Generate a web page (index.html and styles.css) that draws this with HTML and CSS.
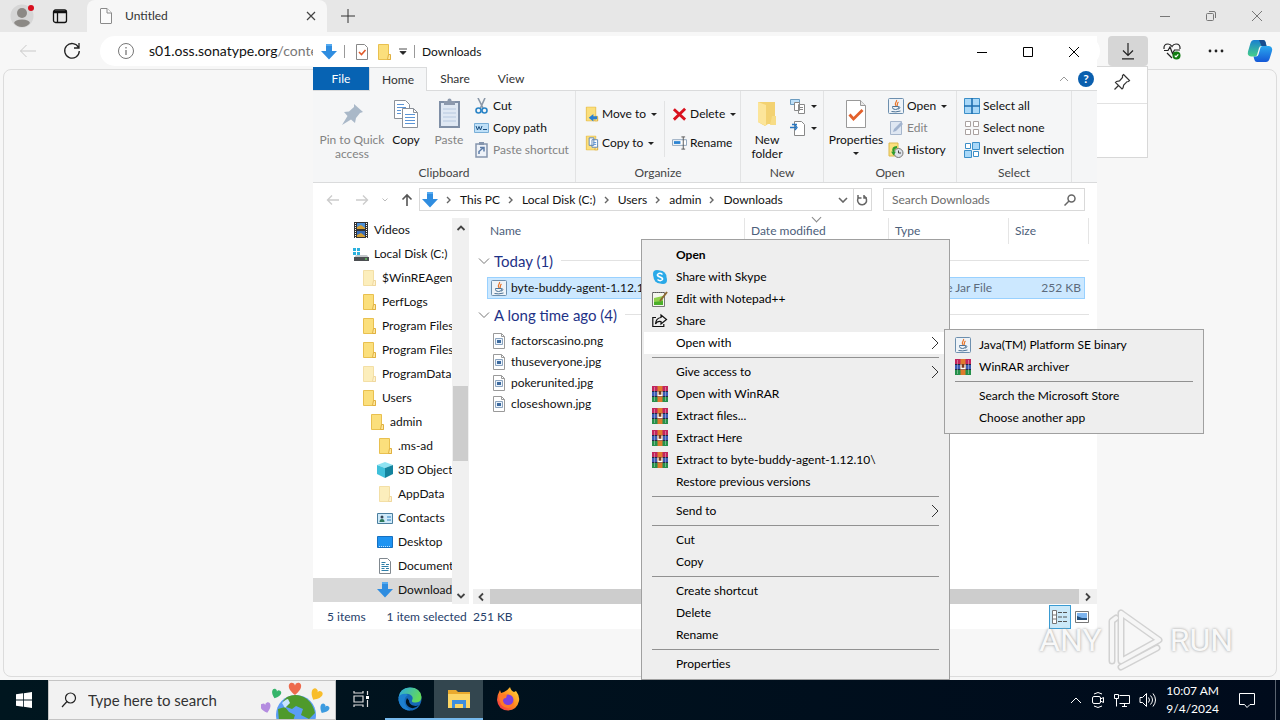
FILE: index.html
```html
<!DOCTYPE html>
<html lang="en">
  <head>
    <meta charset="UTF-8" />
    <meta name="viewport" content="width=device-width, initial-scale=1.0" />
    <title>Desktop</title>
    <link rel="stylesheet" href="styles.css">
  </head>
  <body>
    <!-- shared icons -->
    <svg class="sprite" aria-hidden="true">
      <symbol id="folder" viewBox="0 0 16 16">
        <path d="M2.500 .5h10v11h2v4h-12z" fill="#fbdf7c" stroke="#e9c04f"/>
        <path d="M12.500 10.500h2v5h-3z" fill="#ffe9a0" stroke="#e0b040"/>
      </symbol>
      <symbol id="arrow-blue" viewBox="0 0 16 16">
        <path d="M5 0h6v7h5l-8 8.500L0 7h5z" fill="#2f8de0"/>
        <path d="M5 0h6v2H5z" fill="#55aaf0"/>
      </symbol>
      <symbol id="winrar" viewBox="0 0 16 16">
        <path d="M0 0h16v5H0z" fill="#c2255c"/>
        <path d="M0 5h16v5.500H0z" fill="#3b5bb5"/>
        <path d="M0 10.500h16V16H0z" fill="#25904a"/>
        <path d="M0 5.500h16M0 10.500h16" stroke="#222a44"/>
        <path d="M2.500 1v14M13.500 1v14" stroke="#fff" stroke-opacity=".35"/>
        <path d="M5.500 0h5v16h-5z" fill="#e07a2c"/>
        <path d="M5 5h6v6H5z" fill="#7a3a1c"/>
        <path d="M6 5.500v4h4v-4" fill="none" stroke="#fff" stroke-width="1.300"/>
      </symbol>
      <symbol id="java" viewBox="0 0 16 16">
        <rect x=".5" y=".5" width="15" height="15" rx="1" fill="#eef3f8" stroke="#6d8fae"/>
        <path d="M8.500 2c1 2-3 3-.5 6M10.500 4c-2 1.500-.5 2-1.500 4" fill="none" stroke="#e8762c" stroke-width="1.200"/>
        <path d="M4.500 8.500h6v1q0 2-3 2t-3-2zM10.500 9c2.500-.5 1.500 2-.5 2M3.500 13.500q4 1 9-.5" fill="none" stroke="#4d7396"/>
      </symbol>
      <symbol id="image" viewBox="0 0 16 16">
        <path d="M2.500 .5h8l3 3v12h-11z" fill="#fff" stroke="#9a9a9a"/>
        <path d="M10.500 .5v3h3" fill="none" stroke="#9a9a9a"/>
        <path d="M4.500 5.500h7v6h-7z" fill="#eaf2fb" stroke="#8ba4bf"/>
        <path d="M6 7h4v3H6z" fill="#3d6a9e"/>
      </symbol>
      <symbol id="chevron" viewBox="0 0 8 14">
        <path d="M1 1l6 6-6 6" fill="none" stroke="#333"/>
      </symbol>
      <symbol id="crumb" viewBox="0 0 6 8">
        <path d="M1 1l3 3-3 3" fill="none" stroke="#666" stroke-width="1.400"/>
      </symbol>
      <symbol id="scroll-arrow" viewBox="0 0 10 10">
        <path d="M1.500 7L5 3.500 8.500 7" fill="none" stroke="#444" stroke-width="1.800"/>
      </symbol>
      <symbol id="group-arrow" viewBox="0 0 12 8">
        <path d="M1 1.500l5 5 5-5" fill="none" stroke="#777"/>
      </symbol>
    </svg>

    <main class="browser">
      <div class="tab-strip">
        <div class="profile">
          <svg width="28" height="28" viewBox="0 0 28 28"><circle cx="14" cy="14" r="11.500" fill="#d6d6d6"/><circle cx="14" cy="11" r="5" fill="#8c8985"/><path d="M6 21q1-3.500 8-3.500t8 3.500q-3 4-8 4t-8-4z" fill="#8c8985"/><circle cx="23" cy="6" r="3" fill="#d80f1e"/></svg>
          <svg width="16" height="16" viewBox="0 0 16 16" fill="none" stroke="#111" stroke-width="1.300"><rect x="1.500" y="2" width="13" height="12.500" rx="2"/><path d="M2 4h12" stroke-width="2.500"/><path d="M5.500 4v10"/></svg>
        </div>
        <div class="tab">
          <svg width="16" height="18" viewBox="0 0 16 18" fill="#fbfbfb" stroke="#8a8a8a"><path d="M3 1.500h6l4.500 4.500v10q0 .5-.5.500H3q-.5 0-.5-.5V2q0-.5.500-.5z"/><path d="M9 1.500V6h4.500"/></svg>
          <span>Untitled</span>
          <button class="plain" aria-label="Close tab"><svg width="10" height="10" viewBox="0 0 10 10" stroke="#444" stroke-width="1.200"><path d="M1 1l8 8M9 1l-8 8"/></svg></button>
        </div>
        <button class="plain new-tab" aria-label="New tab"><svg width="14" height="14" viewBox="0 0 14 14" stroke="#333"><path d="M7 0v14M0 7h14"/></svg></button>
        <div class="window-buttons muted">
          <button aria-label="Minimize"><svg width="12" height="12" viewBox="0 0 12 12"><path d="M1 6.500h10"/></svg></button>
          <button aria-label="Restore"><svg width="12" height="12" viewBox="0 0 12 12"><rect x="1.500" y="3.500" width="7" height="7" rx="1"/><path d="M4 1.500h5q1.500 0 1.500 1.500v5"/></svg></button>
          <button aria-label="Close"><svg width="12" height="12" viewBox="0 0 12 12"><path d="M1 1l10 10M11 1L1 11"/></svg></button>
        </div>
      </div>

      <div class="toolbar">
        <button class="tool" aria-label="Back"><svg width="18" height="14" viewBox="0 0 18 14" fill="none" stroke="#c9c9c9"><path d="M17 7H1.500M7.500 1l-6 6 6 6"/></svg></button>
        <button class="tool" aria-label="Refresh"><svg width="18" height="18" viewBox="0 0 18 18" fill="none" stroke="#222" stroke-width="1.300"><path d="M15.500 5.500A7.300 7.300 0 1 0 16.300 9M16 1v5h-5"/></svg></button>
        <div class="address">
          <svg width="18" height="18" viewBox="0 0 18 18" fill="none" stroke="#777"><circle cx="9" cy="9" r="7.500"/><path d="M9 8v5M9 5v1.500" stroke-width="1.300"/></svg>
          <span><b>s01.oss.sonatype.org</b>/content</span>
        </div>
        <button class="tool pressed" aria-label="Downloads"><svg width="14" height="18" viewBox="0 0 14 18" fill="none" stroke="#222" stroke-width="1.200"><path d="M7 1v12M2 8.500l5 5 5-5M1 16.800h12"/></svg></button>
        <button class="tool" aria-label="Browser essentials"><svg width="18" height="18" viewBox="0 0 18 18" fill="none" stroke="#222" stroke-width="1.200"><path d="M1 7Q.500 2 5 2q2.500 0 4 2.500Q10.500 2 13 2q4.500 0 4 5M1 8.500h4l2-3.500 2.500 6.500L11.500 8H17M4 11l5 5"/><circle cx="13.500" cy="13.500" r="4" fill="#107c10" stroke="none"/><path d="M11.700 13.600l1.300 1.300 2.300-2.500" stroke="#fff"/></svg></button>
        <button class="tool" aria-label="Settings and more"><svg width="16" height="4" viewBox="0 0 16 4" fill="#222"><circle cx="2" cy="2" r="1.400"/><circle cx="8" cy="2" r="1.400"/><circle cx="14" cy="2" r="1.400"/></svg></button>
        <button class="tool" aria-label="Copilot">
          <svg width="26" height="24" viewBox="0 0 26 24">
            <defs>
              <linearGradient id="cp1" x1="0" y1="0" x2="0" y2="1"><stop offset="0" stop-color="#1a7fd0"/><stop offset="1" stop-color="#45cf8a"/></linearGradient>
              <linearGradient id="cp2" x1="0" y1="0" x2="0" y2="1"><stop offset="0" stop-color="#2aa8ee"/><stop offset="1" stop-color="#1558d6"/></linearGradient>
            </defs>
            <path d="M7 1h9q2 0 2.500 2l1 4h-5q-2 0-2.500 2l-2 7q-.5 1.500-2 1.500H4q-4-.5-3-5L3.500 4Q4.500 1 7 1z" fill="url(#cp1)"/>
            <path d="M19 23h-9q-2 0-2.500-2l-1-3.500H9q2 0 2.500-2l2-7Q14 7 15.500 7H22q4 .5 3 5L22.500 20q-1 3-3.500 3z" fill="url(#cp2)"/>
            <path d="M12 1h4q2 0 2.500 2l1 4h-5z" fill="#184c8e"/>
          </svg>
        </button>
        <div class="flyout">
          <svg width="18" height="18" viewBox="0 0 18 18" fill="none" stroke="#333" stroke-width="1.200"><path d="M10.500 1.500l6 6-1 1-1.500.2-3.300 3.300-.7 3-1 1-6.500-6.500 1-1 3-.6L9.500 4.500l0-2zM5.500 12.500L1.500 16.500"/></svg>
        </div>
      </div>
      <div class="page"></div>
    </main>

    <section class="explorer">
      <header class="titlebar">
        <svg width="16" height="16"><use href="#arrow-blue"/></svg>
        <i class="bar"></i>
        <svg width="14" height="16" viewBox="0 0 14 16"><path d="M1.500 .5h8l3 3v12h-11z" fill="#fff" stroke="#888"/><path d="M4 8l2.500 2.500L10.500 6" fill="none" stroke="#e05a2b" stroke-width="1.600"/></svg>
        <svg width="16" height="16"><use href="#folder"/></svg>
        <svg width="8" height="8" viewBox="0 0 8 8"><path d="M0 1h8M1 3.500h6L4 6.500z" fill="#222" stroke="#222" stroke-width=".8"/></svg>
        <i class="bar"></i>
        <span>Downloads</span>
        <div class="window-buttons">
          <button aria-label="Minimize"><svg width="12" height="12" viewBox="0 0 12 12"><path d="M1 6.500h10"/></svg></button>
          <button aria-label="Maximize"><svg width="12" height="12" viewBox="0 0 12 12"><path d="M1.500 1.500h9v9h-9z"/></svg></button>
          <button aria-label="Close"><svg width="12" height="12" viewBox="0 0 12 12"><path d="M1 1l10 10M11 1L1 11"/></svg></button>
        </div>
      </header>

      <nav class="tabs">
        <button class="file">File</button>
        <button class="active">Home</button>
        <button>Share</button>
        <button>View</button>
        <div class="tabs-end">
          <svg width="10" height="6" viewBox="0 0 10 6"><path d="M1 5l4-4 4 4" fill="none" stroke="#999"/></svg>
          <button class="help" aria-label="Help">?</button>
        </div>
      </nav>

      <div class="ribbon">
        <div class="group clipboard">
          <div class="group-body">
            <button class="big off w-pin">
              <svg width="32" height="32" viewBox="0 0 32 32"><path d="M18 6l9 8-3 1-4 5-1 5-4-3.500L6 27l5.500-9L8 14l5-.5L18 9z" fill="#a9b8c8"/></svg>
              Pin to Quick<br>access
            </button>
            <button class="big w-copy">
              <svg width="32" height="32" viewBox="0 0 32 32"><g fill="#fff" stroke="#8a9099"><path d="M4.500 2.500h11l4 4v14h-15z"/><path d="M12.500 10.500h11l4 4v15h-15z"/><path d="M23.500 10.500v4h4" fill="none"/></g><path d="M7 6.500h7M7 9.500h9M7 12.500h4M7 15.500h4M15 16.500h10M15 19.500h10M15 22.500h10M15 25.500h10" stroke="#5a94d6"/></svg>
              Copy
            </button>
            <button class="big off w-paste">
              <svg width="32" height="32" viewBox="0 0 32 32"><path d="M7 4h19v25H7z" fill="#dfe8f3" stroke="#7f8fa6" stroke-width="2"/><path d="M11 3h11v4H11z" fill="#8c99ad"/><circle cx="16.500" cy="2.500" r="2" fill="#8c99ad"/><path d="M10 11h13M10 15h13M10 19h13M10 23h13" stroke="#b6c8df"/></svg>
              Paste
            </button>
            <div class="stack">
              <button class="small"><svg width="16" height="16" viewBox="0 0 16 16" fill="none"><path d="M4 0l5 10M11 0L6.500 10" stroke="#8a98a8" stroke-width="1.600"/><circle cx="4.500" cy="12.500" r="2.500" stroke="#2a84c6" stroke-width="1.600"/><circle cx="10.500" cy="12.500" r="2.500" stroke="#2a84c6" stroke-width="1.600"/></svg>Cut</button>
              <button class="small"><svg width="16" height="16" viewBox="0 0 16 16"><path d="M.500 3.500h14v9H.500z" fill="#bfe0f8" stroke="#79aed6"/><path d="M2 6l1.500 4L5 6.500 6.500 10 8 6M9 9.500h4" fill="none" stroke="#1a4f80"/></svg>Copy path</button>
              <button class="small off"><svg width="16" height="16" viewBox="0 0 16 16"><path d="M2 2h11v13H2z" fill="#eef2f8" stroke="#8595ad" stroke-width="1.500"/><path d="M5 0h5v3H5z" fill="#8595ad"/><path d="M5 12V9.500L9 6M6 5.500h4v4" fill="none" stroke="#5e7da8" stroke-width="1.500"/></svg>Paste shortcut</button>
            </div>
          </div>
          <span class="group-name">Clipboard</span>
        </div>

        <div class="group organize">
          <div class="group-body">
            <div class="stack two">
              <button class="small"><svg width="15" height="16" viewBox="0 0 16 16"><use href="#folder"/><path d="M14 10.500h-4V8l-5 4 5 4v-2.500h4z" fill="#2c7fd0"/></svg>Move to<i class="caret"></i></button>
              <button class="small"><svg width="15" height="16" viewBox="0 0 16 16"><use href="#folder"/><path d="M5.500 2.500h5v8h-5zM8.500 4.500h6v8h-6z" fill="#fff" stroke="#5d84b4"/><path d="M10 7.500h3M10 9.500h3" stroke="#5a94d6"/></svg>Copy to<i class="caret"></i></button>
            </div>
            <i class="divider"></i>
            <div class="stack two">
              <button class="small"><svg width="15" height="16" viewBox="0 0 16 16"><path d="M2 3l12 11M14 2.500L2 14" stroke="#d9121f" stroke-width="3"/></svg>Delete<i class="caret"></i></button>
              <button class="small"><svg width="15" height="16" viewBox="0 0 16 16" fill="none"><path d="M.500 4.500h15v6H.500z" fill="#fff" stroke="#8aa0b8"/><path d="M2 6h7v3H2z" fill="#2c84d2"/><path d="M10 1.500h4M12 1.500v13M10 14.500h4" stroke="#555"/></svg>Rename</button>
            </div>
          </div>
          <span class="group-name">Organize</span>
        </div>

        <div class="group new">
          <div class="group-body">
            <button class="big w-new">
              <svg width="32" height="32" viewBox="0 0 32 32"><path d="M7 4h17v22h-7l-3 2-7-4z" fill="#f3d272"/><path d="M7 4l8 3v21l-8-4z" fill="#fce59a"/><path d="M21 18h4v9h-6z" fill="#f7dc86"/></svg>
              New<br>folder
            </button>
            <div class="stack">
              <button class="small" aria-label="New item"><svg width="16" height="16" viewBox="0 0 16 16"><path d="M.500 1.500h9v5h-9z" fill="#bfe0f8" stroke="#6c9cc0"/><path d="M4.500 4.500h5v8h-5zM8.500 6.500h6v9h-6z" fill="#fff" stroke="#888"/><path d="M10 9.500h3M10 11.500h3" stroke="#888"/></svg><i class="caret"></i></button>
              <button class="small" aria-label="Easy access"><svg width="16" height="16" viewBox="0 0 16 16"><path d="M4.500 1.500h7l3 3v11h-10z" fill="#fff" stroke="#888"/><path d="M0 7.500h6M2 4.500h5M5 5l2 2.500-2 2.500" fill="none" stroke="#2776c0" stroke-width="1.300"/></svg><i class="caret"></i></button>
            </div>
          </div>
          <span class="group-name">New</span>
        </div>

        <div class="group open">
          <div class="group-body">
            <button class="big w-props">
              <svg width="32" height="32" viewBox="0 0 32 32"><path d="M6.500 2.500h14l5 5v22h-19z" fill="#fff" stroke="#999"/><path d="M20.500 2.500v5h5" fill="#e8e8e8" stroke="#999"/><path d="M9.500 16.500l4 4.500 9-9" fill="none" stroke="#e3602b" stroke-width="2.800"/></svg>
              Properties
              <i class="caret"></i>
            </button>
            <div class="stack">
              <button class="small"><svg width="16" height="16"><use href="#java"/></svg>Open<i class="caret"></i></button>
              <button class="small off"><svg width="16" height="16" viewBox="0 0 16 16"><path d="M2.500 1.500h11v13h-11z" fill="#dfe7f2" stroke="#a6b6cc"/><path d="M5 12l1-3 7-7 2 2-7 7z" fill="#a2b4cf"/></svg>Edit</button>
              <button class="small"><svg width="16" height="16" viewBox="0 0 16 16"><path d="M1 1h9v13H1z" fill="#fbe07e" stroke="#dcb94e"/><circle cx="10.500" cy="11" r="4.500" fill="#dde3ea" stroke="#777"/><path d="M10.500 8.500V11h2.500" fill="none" stroke="#444"/><path d="M9 4Q3 4 4.500 10L3 9.500l2.500 4 2.500-4-1.500.5Q5.500 7 9 6z" fill="#2e9e2e"/></svg>History</button>
            </div>
          </div>
          <span class="group-name">Open</span>
        </div>

        <div class="group select">
          <div class="group-body">
            <div class="stack">
              <button class="small"><svg width="16" height="16" viewBox="0 0 16 16"><path d="M.500 .5h15v15H.500z" fill="#a9d8f8" stroke="#3c8fc8"/><path d="M8 0v16M0 8h16" stroke="#1f6fb0" stroke-width="1.600"/></svg>Select all</button>
              <button class="small"><svg width="16" height="16" viewBox="0 0 16 16" fill="#fff" stroke="#aaa2a0"><path d="M1.500 1.500h5v5h-5zM9.500 1.500h5v5h-5zM1.500 9.500h5v5h-5zM9.500 9.500h5v5h-5z"/></svg>Select none</button>
              <button class="small"><svg width="16" height="16" viewBox="0 0 16 16" stroke="#3c8fc8"><path d="M8.500 .5h7v7h-7zM.500 8.500h7v7h-7z" fill="#a9d8f8"/><path d="M1.500 1.500h5v5h-5zM9.500 9.500h5v5h-5z" fill="#fff"/></svg>Invert selection</button>
            </div>
          </div>
          <span class="group-name">Select</span>
        </div>
      </div>

      <div class="navbar">
        <div class="arrows">
          <svg width="14" height="12" viewBox="0 0 14 12" fill="none" stroke="#ccc" stroke-width="1.400"><path d="M13 6H2M6 1.500L1.500 6 6 10.500"/></svg>
          <svg width="14" height="12" viewBox="0 0 14 12" fill="none" stroke="#ccc" stroke-width="1.400"><path d="M1 6h11M8 1.500L12.500 6 8 10.500"/></svg>
          <svg width="6" height="4" viewBox="0 0 6 4" fill="none" stroke="#bbb"><path d="M.500 .5L3 3 5.500 .5"/></svg>
          <svg width="12" height="14" viewBox="0 0 12 14" fill="none" stroke="#555" stroke-width="1.600"><path d="M6 13V2M1.500 6.500L6 2l4.500 4.500"/></svg>
        </div>
        <div class="path">
          <svg width="16" height="16"><use href="#arrow-blue"/></svg>
          <svg width="6" height="8"><use href="#crumb"/></svg><a href="#">This PC</a>
          <svg width="6" height="8"><use href="#crumb"/></svg><a href="#">Local Disk (C:)</a>
          <svg width="6" height="8"><use href="#crumb"/></svg><a href="#">Users</a>
          <svg width="6" height="8"><use href="#crumb"/></svg><a href="#">admin</a>
          <svg width="6" height="8"><use href="#crumb"/></svg><a href="#">Downloads</a>
          <div class="path-end">
            <svg width="10" height="6" viewBox="0 0 10 6" fill="none" stroke="#666" stroke-width="1.600"><path d="M1 1l4 4 4-4"/></svg>
            <button aria-label="Refresh"><svg width="12" height="12" viewBox="0 0 12 12" fill="none" stroke="#666" stroke-width="1.500"><path d="M8.500 2.500A4.500 4.500 0 1 1 3 3M2 1v3h3.500M8 1v3h3"/></svg></button>
          </div>
        </div>
        <div class="search">
          <input type="text" placeholder="Search Downloads" aria-label="Search Downloads">
          <svg width="12" height="12" viewBox="0 0 12 12" fill="none" stroke="#666" stroke-width="1.500"><circle cx="7.500" cy="4.500" r="3.500"/><path d="M5 7l-4.500 4.500"/></svg>
        </div>
      </div>

      <div class="content">
        <ul class="tree">
          <li class="d0"><svg width="16" height="16" viewBox="0 0 16 16"><path d="M1 0h14v16H1z" fill="#333"/><path d="M4 1h8v6H4z" fill="#4c8fd6"/><path d="M4 9h8v6H4z" fill="#386db8"/><path d="M4 5l4-2 4 3v1H4zM4 13l4-2 4 3v1H4z" fill="#d6a032"/><path d="M2.500 1v15M13.500 1v15" stroke="#fff" stroke-dasharray="1 1"/></svg>Videos</li>
          <li class="d0"><svg width="16" height="16" viewBox="0 0 16 16"><path d="M0 2h3v3H0zM4 2h3v3H4zM0 6h3v3H0zM4 6h3v3H4z" fill="#2bb1de"/><path d="M3 9h11l2 3H1z" fill="#c4c8cc"/><path d="M1 11h15v4H1z" fill="#4c4f52"/><path d="M12 13h2" stroke="#6f6"/></svg>Local Disk (C:)</li>
          <li class="d1 pale"><svg width="16" height="16"><use href="#folder"/></svg>$WinREAgent</li>
          <li class="d1"><svg width="16" height="16"><use href="#folder"/></svg>PerfLogs</li>
          <li class="d1"><svg width="16" height="16"><use href="#folder"/></svg>Program Files</li>
          <li class="d1"><svg width="16" height="16"><use href="#folder"/></svg>Program Files (x86)</li>
          <li class="d1 pale"><svg width="16" height="16"><use href="#folder"/></svg>ProgramData</li>
          <li class="d1"><svg width="16" height="16"><use href="#folder"/></svg>Users</li>
          <li class="d2"><svg width="16" height="16"><use href="#folder"/></svg>admin</li>
          <li class="d3"><svg width="16" height="16"><use href="#folder"/></svg>.ms-ad</li>
          <li class="d3"><svg width="16" height="16" viewBox="0 0 16 16"><path d="M0 3l8-3 8 3-8 3z" fill="#8fe3f2"/><path d="M0 3l8 3v10l-8-4z" fill="#3fc0da"/><path d="M16 3L8 6v10l8-4z" fill="#14849e"/></svg>3D Objects</li>
          <li class="d3 pale"><svg width="16" height="16"><use href="#folder"/></svg>AppData</li>
          <li class="d3"><svg width="16" height="16" viewBox="0 0 16 16"><path d="M.500 3.500h15v10H.500z" fill="#cfeafa" stroke="#4b7f9f"/><circle cx="5" cy="7" r="1.500" fill="#345"/><path d="M2.500 12q0-3 2.500-3t2.500 3z" fill="#2c7a5c"/><path d="M10 7h4M10 10h4" stroke="#2c7fc0"/></svg>Contacts</li>
          <li class="d3"><svg width="16" height="16" viewBox="0 0 16 16"><path d="M.500 2.500h15v11H.500z" fill="#1d93f2" stroke="#1670c0"/><path d="M2 12.500h12" stroke="#bfe2ff" stroke-dasharray="1 1"/></svg>Desktop</li>
          <li class="d3"><svg width="16" height="16" viewBox="0 0 16 16"><path d="M2.500 .5h8l3 3v12h-11z" fill="#fff" stroke="#80888f"/><path d="M4.500 4.500h4M4.500 6.500h3M9 6.500h3M4.500 8.500h7M4.500 10.500h3M9 10.500h3M4.500 12.500h7" stroke="#2f7fa8"/></svg>Documents</li>
          <li class="d3 current"><svg width="16" height="16"><use href="#arrow-blue"/></svg>Downloads</li>
        </ul>
        <div class="scroll-y">
          <svg width="10" height="10"><use href="#scroll-arrow"/></svg>
          <div class="track"><div class="thumb"></div></div>
          <svg class="down" width="10" height="10"><use href="#scroll-arrow"/></svg>
        </div>

        <div class="files">
          <table>
            <colgroup><col class="c-name"><col class="c-date"><col class="c-type"><col></colgroup>
            <thead>
              <tr><th>Name</th><th class="sorted">Date modified</th><th>Type</th><th class="last">Size</th></tr>
            </thead>
            <tbody>
              <tr class="group-row today"><td colspan="4"><div><svg width="12" height="8"><use href="#group-arrow"/></svg>Today (1)</div></td></tr>
              <tr class="selected"><td><div class="name"><svg width="16" height="16"><use href="#java"/></svg>byte-buddy-agent-1.12.10.jar</div></td><td></td><td class="type">Executable Jar File</td><td class="size">252 KB</td></tr>
              <tr class="group-row"><td colspan="4"><div><svg width="12" height="8"><use href="#group-arrow"/></svg>A long time ago (4)</div></td></tr>
              <tr><td><div class="name"><svg width="16" height="16"><use href="#image"/></svg>factorscasino.png</div></td><td></td><td></td><td></td></tr>
              <tr><td><div class="name"><svg width="16" height="16"><use href="#image"/></svg>thuseveryone.jpg</div></td><td></td><td></td><td></td></tr>
              <tr><td><div class="name"><svg width="16" height="16"><use href="#image"/></svg>pokerunited.jpg</div></td><td></td><td></td><td></td></tr>
              <tr><td><div class="name"><svg width="16" height="16"><use href="#image"/></svg>closeshown.jpg</div></td><td></td><td></td><td></td></tr>
            </tbody>
          </table>
          <div class="scroll-x">
            <svg class="left" width="10" height="10"><use href="#scroll-arrow"/></svg>
            <div class="thumb"></div>
            <svg class="right" width="10" height="10"><use href="#scroll-arrow"/></svg>
          </div>
        </div>
      </div>

      <footer class="status">
        <span>5 items</span>
        <span>1 item selected&nbsp; 251 KB</span>
        <div class="views">
          <button class="on" aria-label="Details"><svg width="18" height="16" viewBox="0 0 18 16"><path d="M1.500 1.500h4v13h-4zM1.500 6h4M1.500 10h4" fill="#fff" stroke="#777"/><path d="M7 3.500h4M12 3.500h4M7 8h4M12 8h4M7 12.500h4M12 12.500h4" stroke="#555"/></svg></button>
          <button aria-label="Large icons"><svg width="14" height="12" viewBox="0 0 14 12"><path d="M.500 .5h13v11H.500z" fill="#fff" stroke="#777"/><path d="M2 2h10v7H2z" fill="#7db4ee"/><path d="M2 5l5 2h5v2H2z" fill="#23507c"/></svg></button>
        </div>
      </footer>
    </section>

    <div class="watermark">
      <span>ANY</span>
      <svg width="58" height="62" viewBox="0 0 58 62" fill="none" stroke-linejoin="round" stroke-linecap="round"><g stroke="#d2d2d2" stroke-width="7"><path d="M5 52V12l4-3M14 4v48l38-21L14 4M14 58l36-19"/></g><g stroke="#f6f6f6" stroke-width="4"><path d="M5 52V12l4-3M14 4v48l38-21L14 4M14 58l36-19"/></g></svg>
      <span>RUN</span>
    </div>

    <menu class="menu context">
      <li><button class="default">Open</button></li>
      <li><button><svg width="16" height="16" viewBox="0 0 16 16"><circle cx="8" cy="8" r="6.500" fill="#2aa9e8"/><circle cx="5" cy="5" r="4" fill="#2aa9e8"/><circle cx="11" cy="11" r="4" fill="#2aa9e8"/><path d="M10.500 5.500Q8 3.500 6 5t2 3 2 3-4.500-.5" fill="none" stroke="#fff" stroke-width="1.500"/></svg>Share with Skype</button></li>
      <li><button><svg width="16" height="16" viewBox="0 0 16 16"><path d="M.500 1.500h12v14H.500z" fill="#f4f6ee" stroke="#777"/><path d="M2 7l9-2v9H2z" fill="#8fd14a"/><path d="M2 11l9-1v4H2z" fill="#4caf2a"/><path d="M15 1L8 10" stroke="#8d6a34" stroke-width="2"/><path d="M1 1.500h11" stroke="#555" stroke-dasharray="1 1"/></svg>Edit with Notepad++</button></li>
      <li><button><svg width="16" height="16" viewBox="0 0 16 16" fill="none" stroke="#111" stroke-width="1.200"><path d="M4 4.500H.800v9h11V11M9 2l5.500 4.500L9 11V8.500q-4-.5-5.500 2.500Q4 5 9 4.500z"/></svg>Share</button></li>
      <li><button class="hover">Open with<svg class="more" width="8" height="14"><use href="#chevron"/></svg></button></li>
      <li class="sep"></li>
      <li><button>Give access to<svg class="more" width="8" height="14"><use href="#chevron"/></svg></button></li>
      <li><button><svg width="16" height="16"><use href="#winrar"/></svg>Open with WinRAR</button></li>
      <li><button><svg width="16" height="16"><use href="#winrar"/></svg>Extract files...</button></li>
      <li><button><svg width="16" height="16"><use href="#winrar"/></svg>Extract Here</button></li>
      <li><button><svg width="16" height="16"><use href="#winrar"/></svg>Extract to byte-buddy-agent-1.12.10\</button></li>
      <li><button>Restore previous versions</button></li>
      <li class="sep"></li>
      <li><button>Send to<svg class="more" width="8" height="14"><use href="#chevron"/></svg></button></li>
      <li class="sep"></li>
      <li><button>Cut</button></li>
      <li><button>Copy</button></li>
      <li class="sep"></li>
      <li><button>Create shortcut</button></li>
      <li><button>Delete</button></li>
      <li><button>Rename</button></li>
      <li class="sep"></li>
      <li><button>Properties</button></li>
    </menu>

    <menu class="menu open-with">
      <li><button><svg width="16" height="16"><use href="#java"/></svg>Java(TM) Platform SE binary</button></li>
      <li><button><svg width="16" height="16"><use href="#winrar"/></svg>WinRAR archiver</button></li>
      <li class="sep"></li>
      <li><button>Search the Microsoft Store</button></li>
      <li><button>Choose another app</button></li>
    </menu>

    <footer class="taskbar">
      <button class="start" aria-label="Start"><svg width="16" height="16" viewBox="0 0 16 16" fill="#fff"><path d="M0 2.300L7 1.300V7.600H0zM7.800 1.200L16 0v7.600H7.800zM0 8.400h7v6.300l-7-1zM7.800 8.400H16V16l-8.200-1.200z"/></svg></button>
      <div class="task-search">
        <svg width="16" height="16" viewBox="0 0 16 16" fill="none" stroke="#222" stroke-width="1.200"><circle cx="9.500" cy="6" r="5"/><path d="M6 9.500L1 15"/></svg>
        <input type="text" placeholder="Type here to search" aria-label="Type here to search">
        <svg width="70" height="38" viewBox="0 0 70 38">
          <defs><path id="heart" d="M0 5C-8-1-5-6-2-5Q-.5-5 0-3Q.5-5 2-5C5-6 8-1 0 5z"/></defs>
          <circle cx="35" cy="34" r="20" fill="#5b9df5"/>
          <path d="M26 16q10-5 20 2 6 5 8 14l-6 6-8-4 2-6-7-3-4 3-6-2-3-6zM17 28l7-2 4 5 6 3-2 6H18z" fill="#4f9a2c"/>
          <path d="M21 22q4-4 6-4l2 4-5 5z" fill="#c9e4ff"/>
          <g><use href="#heart" transform="translate(5 27) rotate(-15)" fill="#b48ce0"/><use href="#heart" transform="translate(15 13) rotate(20) scale(.9)" fill="#35b56a"/><use href="#heart" transform="translate(34 8) scale(1.200)" fill="#ee6a4d"/><use href="#heart" transform="translate(55 14) rotate(30) scale(1.100)" fill="#f8bd2b"/><use href="#heart" transform="translate(63 28) rotate(30) scale(.9)" fill="#3c9be0"/></g>
        </svg>
      </div>
      <button class="app" aria-label="Task view"><svg width="18" height="18" viewBox="0 0 18 18" fill="none" stroke="#ddd" stroke-width="1.200"><path d="M2 1v2h9V1M2 6h9v6H2zM2 17v-2h9v2M15.500 1v4M15.500 10v7"/><path d="M14 6h3v3h-3z" fill="#fff" stroke="none"/></svg></button>
      <button class="app running" aria-label="Microsoft Edge">
        <svg width="24" height="24" viewBox="0 0 24 24">
          <defs><linearGradient id="eg" x1="0" y1="0" x2="1" y2=".4"><stop offset="0" stop-color="#2aa7e4"/><stop offset="1" stop-color="#62d95b"/></linearGradient></defs>
          <circle cx="12" cy="12" r="11.500" fill="#1668b8"/>
          <path d="M.500 11Q1.500 .5 12 .5T23.500 10q0 5-5.500 5.500-5 0-4-2 2-4-2-6Q7 5 .500 11z" fill="url(#eg)"/>
          <path d="M9 11q-3 6 2 9t10-2q-3 1.500-6 .5-4-1.500-4-5z" fill="#00131f"/>
          <path d="M1 9q5-4 9-1-4 2-3.500 7t6 8.500Q2 23 .5 13z" fill="#1d80cf"/>
        </svg>
      </button>
      <button class="app running focused" aria-label="File Explorer"><svg width="24" height="20" viewBox="0 0 24 20"><path d="M1 1h8l2 2h12v16H1z" fill="#e9a92d"/><path d="M1 5h22v14H1z" fill="#fcd565"/><path d="M5 11h14v8h-3v-4H8v4H5z" fill="#3f8ede"/></svg></button>
      <button class="app" aria-label="Firefox">
        <svg width="24" height="24" viewBox="0 0 24 24">
          <defs><linearGradient id="ff" x1="1" y1="0" x2="0" y2="1"><stop offset="0" stop-color="#ffe03d"/><stop offset=".5" stop-color="#ff8a1f"/><stop offset="1" stop-color="#f0224f"/></linearGradient></defs>
          <path d="M14 0q1 4 4 5l2-1q4 5 3 10-2 9-11 9.500Q2 23 1 13 1 8 4 3l1 3 3-1q3-1 6-5z" fill="url(#ff)"/>
          <circle cx="12" cy="13" r="5.500" fill="#7b3fe0"/>
          <path d="M3 9q4-3 8-1l-1 3q-3 0-3 3 1 4 5 4 5 0 6-5 1 7-6 8Q3 20 3 9z" fill="#ff7a28"/>
        </svg>
      </button>
      <div class="tray">
        <svg width="12" height="8" viewBox="0 0 12 8"><path d="M1 7l5-5 5 5"/></svg>
        <svg width="14" height="18" viewBox="0 0 14 18"><rect x="1.500" y="5.500" width="8" height="7" rx="1.500"/><path d="M9.500 8l3-1.500v5l-3-1.500M3 3q4-3 8 0M3 15q4 3 8 0"/></svg>
        <svg width="16" height="16" viewBox="0 0 16 16"><path d="M5.500 3.500h10v8h-10M8 14.500h5M10.500 11.500v3M.500 2.500h4v4h-4zM2.500 6.500v8"/></svg>
        <svg width="18" height="16" viewBox="0 0 18 16"><path d="M1 5.500h2.500l4-4v13l-4-4H1zM9.500 5.500q2 2.500 0 5M11.500 3.500q4 4.500 0 9M14 1.500q5 6.500 0 13"/></svg>
        <time>10:07 AM<br>9/4/2024</time>
        <svg width="18" height="18" viewBox="0 0 18 18"><path d="M1.500 2.500h15v11H12L9 16.500 6.500 13.500h-5z"/></svg>
        <i class="peek"></i>
      </div>
    </footer>
  </body>
</html>
```

FILE: styles.css
```css
* {
  box-sizing: border-box;
}

body {
  margin: 0;
  min-height: 100vh;
  display: flex;
  flex-direction: column;
  position: relative;
  overflow: hidden;
  font-family: Lato, "Noto Sans", sans-serif;
  font-size: 12px;
  line-height: 16px;
  color: #111;
  background: #f7f7f7;
}

button,
input {
  margin: 0;
  padding: 0;
  border: 0;
  background: none;
  font: inherit;
  color: inherit;
}

svg {
  display: block;
  flex: none;
}

ul,
menu {
  list-style: none;
  margin: 0;
  padding: 0;
}

a {
  color: inherit;
  text-decoration: none;
}

.sprite {
  position: absolute;
  width: 0;
  height: 0;
}

/* browser */

.browser {
  flex: 1;
  display: flex;
  flex-direction: column;
}

.tab-strip {
  display: flex;
  height: 32px;
  background: #e7e7e7;
}

.profile {
  display: flex;
  align-items: center;
  gap: 16px;
  width: 87px;
  padding-left: 8px;
}

.tab {
  display: flex;
  align-items: center;
  gap: 11px;
  width: 240px;
  padding: 0 11px;
  background: #f7f7f7;
  border-radius: 8px 8px 0 0;
  color: #333;
}

.tab .plain {
  margin-left: auto;
}

.new-tab {
  padding: 0 14px;
}

.window-buttons {
  display: flex;
  margin-left: auto;
}

.window-buttons button {
  display: flex;
  align-items: center;
  justify-content: center;
  width: 46px;
}

.window-buttons svg {
  fill: none;
  stroke: #000;
}

.window-buttons.muted svg {
  stroke: #777;
}

.toolbar {
  display: flex;
  align-items: center;
  gap: 4px;
  height: 37px;
  padding-left: 8px;
  position: relative;
}

.tool {
  display: flex;
  align-items: center;
  justify-content: center;
  width: 40px;
  height: 30px;
  border-radius: 4px;
}

.pressed {
  background: #d6d6d6;
}

.address {
  flex: 1;
  display: flex;
  align-items: center;
  gap: 14px;
  height: 30px;
  margin: 0 4px;
  padding-left: 17px;
  border-radius: 15px;
  background: #fff;
  font-size: 14px;
  color: #777;
}

.address b {
  font-weight: normal;
  color: #111;
}

.flyout {
  position: absolute;
  top: 34px;
  right: 132px;
  width: 360px;
  height: 92px;
  border: 1px solid #d8d8d8;
  background: linear-gradient(#fff 36px, #e2e2e2 36px, #e2e2e2 37px, #fff 37px);
}

.flyout svg {
  margin: 6px 16px 0 auto;
}

.page {
  flex: 1;
  margin: 0 3px 3px;
  border: 1px solid #dcdcdc;
  border-radius: 8px;
}

/* file explorer window */

.explorer {
  position: absolute;
  left: 313px;
  top: 36px;
  width: 784px;
  height: 593px;
  display: flex;
  flex-direction: column;
  background: #fff;
}

.titlebar {
  display: flex;
  align-items: center;
  gap: 7px;
  height: 31px;
  padding-left: 8px;
}

.titlebar .window-buttons {
  align-self: stretch;
}

.bar {
  width: 1px;
  height: 13px;
  background: #999;
}

.bar + svg {
  margin-left: 3px;
}

.tabs {
  display: flex;
  height: 24px;
  border-bottom: 1px solid #dadbdc;
}

.tabs > button {
  width: 56px;
  color: #333;
}

.tabs .file {
  background: #0763b3;
  color: #fff;
}

.tabs .active {
  width: 58px;
  margin-bottom: -1px;
  border: 1px solid #dadbdc;
  border-bottom: 0;
  background: #f5f6f7;
}

.tabs-end {
  display: flex;
  align-items: center;
  gap: 9px;
  margin-left: auto;
  padding-right: 3px;
}

.help {
  width: 16px;
  height: 16px;
  border-radius: 50%;
  background: #0a5fae;
  color: #fff;
  font-weight: bold;
}

.ribbon {
  display: flex;
  height: 92px;
  background: #f5f6f7;
  border-bottom: 1px solid #dadbdc;
}

.group {
  display: flex;
  flex-direction: column;
  justify-content: space-between;
  padding: 4px 0 1px;
  border-right: 1px solid #e2e3e4;
}

.group-body {
  display: flex;
  padding-left: 5px;
}

.group-name {
  text-align: center;
  color: #444;
}

.clipboard {
  width: 263px;
}

.organize {
  width: 165px;
}

.organize .group-body {
  padding-left: 8px;
}

.new {
  width: 83px;
}

.open {
  width: 133px;
}

.open .group-body {
  padding-left: 2px;
}

.select {
  width: 115px;
}

.select .group-body {
  padding-left: 7px;
}

.big {
  display: flex;
  flex-direction: column;
  align-items: center;
  height: 66px;
  padding-top: 3px;
  line-height: 14px;
}

.big svg {
  margin-bottom: 3px;
}

.w-pin {
  width: 68px;
  white-space: nowrap;
}

.w-copy {
  width: 40px;
}

.w-paste {
  width: 46px;
}

.w-new {
  width: 42px;
}

.w-props {
  width: 60px;
}

.off {
  color: #838383;
}

.stack {
  display: flex;
  flex-direction: column;
}

.big + .stack {
  margin-left: 2px;
}

.small {
  display: flex;
  align-items: center;
  gap: 3px;
  height: 22px;
  white-space: nowrap;
}

.two {
  gap: 7px;
  padding-top: 8px;
}

.divider {
  width: 1px;
  height: 56px;
  margin: 6px 7px 0;
  background: #e2e3e4;
}

.caret {
  margin-left: 2px;
  border: 3px solid transparent;
  border-top-color: #222;
  border-bottom: 0;
}

.big .caret {
  margin: 5px 0 0;
}

.navbar {
  display: flex;
  align-items: center;
  height: 35px;
  padding: 0 12px 2px 0;
}

.arrows {
  display: flex;
  align-items: center;
  gap: 15px;
  width: 106px;
  padding-left: 13px;
}

.arrows svg:nth-child(n + 3) {
  margin-left: -2px;
}

.path {
  flex: 1;
  display: flex;
  align-items: center;
  gap: 8px;
  height: 23px;
  padding-left: 2px;
  border: 1px solid #d9d9d9;
}

.path-end {
  display: flex;
  align-items: center;
  gap: 5px;
  height: 100%;
  margin-left: auto;
}

.path-end button {
  height: 100%;
  padding: 0 3px 0 2px;
  border-left: 1px solid #d9d9d9;
}

.search {
  display: flex;
  align-items: center;
  width: 202px;
  height: 23px;
  margin-left: 11px;
  padding: 0 8px;
  border: 1px solid #d9d9d9;
}

.search input {
  flex: 1;
  min-width: 0;
}

input::placeholder {
  color: #6d6d6d;
  opacity: 1;
}

.content {
  flex: 1;
  min-height: 0;
  display: flex;
}

.tree {
  width: 139px;
  overflow: hidden;
}

.tree li {
  display: flex;
  align-items: center;
  gap: 5px;
  height: 24px;
  white-space: nowrap;
}

.d0 {
  padding-left: 40px;
}

.d1 {
  padding-left: 48px;
}

.d2 {
  padding-left: 56px;
}

.d3 {
  padding-left: 64px;
}

.pale svg {
  opacity: .5;
}

.current {
  background: #d9d9d9;
}

.scroll-y {
  display: flex;
  flex-direction: column;
  align-items: center;
  width: 17px;
  padding: 5px 0 3px;
  background: #f0f0f0;
}

.track {
  flex: 1;
  width: 15px;
  padding-top: 153px;
}

.track .thumb {
  height: 75px;
}

.thumb {
  background: #cdcdcd;
}

.down {
  transform: rotate(180deg);
}

.files {
  flex: 1;
  min-width: 0;
  display: flex;
  flex-direction: column;
  justify-content: space-between;
  padding-left: 4px;
}

table {
  width: 598px;
  margin-left: 14px;
  table-layout: fixed;
  border-collapse: separate;
  border-spacing: 0;
}

.c-name {
  width: 257px;
}

.c-date {
  width: 144px;
}

.c-type {
  width: 120px;
}

th {
  position: relative;
  height: 26px;
  padding: 0 0 0 3px;
  text-align: left;
  font-weight: normal;
  color: #4c607a;
}

th + th {
  padding-left: 6px;
  border-left: 1px solid #e5e5e5;
}

/* sort mark over the column name */
.sorted::before {
  content: "";
  position: absolute;
  top: -4px;
  left: 68px;
  width: 6px;
  height: 6px;
  border: solid #888;
  border-width: 0 1px 1px 0;
  transform: rotate(45deg);
}

.last::after {
  content: "";
  position: absolute;
  top: 0;
  right: -4px;
  height: 26px;
  border-left: 1px solid #e5e5e5;
}

td {
  height: 21px;
  padding: 0;
}

.group-row td {
  height: 31px;
}

.group-row.today td {
  height: 33px;
}

.group-row div {
  display: flex;
  align-items: center;
  gap: 4px;
  margin: 0 -4px 0 -9px;
  font-size: 15px;
  line-height: 20px;
  color: #1e3287;
}

.group-row div::after {
  content: "";
  flex: 1;
  height: 1px;
  margin-left: 4px;
  background: #e2e2e2;
}

.name {
  display: flex;
  align-items: center;
  gap: 4px;
  padding-left: 4px;
}

.selected td {
  height: 22px;
  background: #cce8ff;
  border: solid #99d1ff;
  border-width: 1px 0;
}

.selected td:first-child {
  border-left-width: 1px;
}

.selected td:last-child {
  border-right-width: 1px;
}

.selected .name {
  padding-left: 3px;
}

.type {
  padding-left: 7px;
  color: #5c6b7c;
}

.size {
  padding-right: 3px;
  text-align: right;
  color: #5c6b7c;
}

.scroll-x {
  display: flex;
  align-items: center;
  gap: 4px;
  height: 15px;
  padding: 0 4px 0 3px;
  background: #f0f0f0;
}

.scroll-x .thumb {
  flex: 1;
  height: 15px;
}

.left {
  transform: rotate(-90deg);
}

.right {
  transform: rotate(90deg);
}

.status {
  display: flex;
  align-items: center;
  gap: 21px;
  height: 25px;
  padding: 0 8px 0 14px;
  color: #26406a;
}

.views {
  display: flex;
  align-items: center;
  margin-left: auto;
  gap: 4px;
}

.views .on {
  padding: 3px 1px;
  border: 1px solid #3a9bd2;
  background: #cbe9f9;
}

/* menus */

.menu {
  position: absolute;
  padding: 4px 2px;
  border: 1px solid #a0a0a0;
  background: #eee;
}

.context {
  left: 641px;
  top: 239px;
  width: 309px;
}

.open-with {
  left: 944px;
  top: 329px;
  width: 260px;
}

.menu button {
  display: flex;
  align-items: center;
  width: 100%;
  height: 22px;
  padding-left: 32px;
  text-align: left;
  color: #000;
}

.menu button svg {
  margin: 0 8px 0 -24px;
}

.menu .default {
  font-weight: bold;
}

.menu .hover {
  background: #fff;
}

.menu button .more {
  margin: 0 8px 0 auto;
}

.sep {
  height: 1px;
  margin: 3px 8px;
  background: #919191;
}

.watermark {
  position: absolute;
  right: 47px;
  bottom: 49px;
  display: flex;
  align-items: center;
  gap: 5px;
  font-family: Roboto, sans-serif;
  font-size: 32px;
  line-height: 62px;
  color: #f8f8f8;
  text-shadow: 0 0 3px #999;
}

/* taskbar */

.taskbar {
  display: flex;
  height: 40px;
  background: linear-gradient(90deg, #00161f, #000b1c);
}

.start,
.app {
  display: flex;
  align-items: center;
  justify-content: center;
  width: 48px;
}

.app {
  width: 49px;
  border-bottom: 2px solid transparent;
}

.task-search {
  display: flex;
  align-items: center;
  gap: 11px;
  width: 288px;
  padding: 0 4px 0 12px;
  border: 1px solid #c4c4c4;
  background: #f2f2f2;
  font-size: 15px;
}

.task-search input {
  flex: 1;
  min-width: 0;
}

.task-search input::placeholder {
  color: #333;
}

.running {
  border-bottom-color: #76b9ed;
}

.focused {
  background: #33464f;
}

.tray {
  display: flex;
  align-items: center;
  gap: 9px;
  margin-left: auto;
  color: #fff;
}

.tray svg {
  fill: none;
  stroke: #fff;
}

.tray time {
  line-height: 18px;
  text-align: center;
}

.tray time + svg {
  margin-left: 10px;
}

.peek {
  width: 5px;
  height: 40px;
  margin-left: 10px;
  border-left: 1px solid #5a6470;
}
```
